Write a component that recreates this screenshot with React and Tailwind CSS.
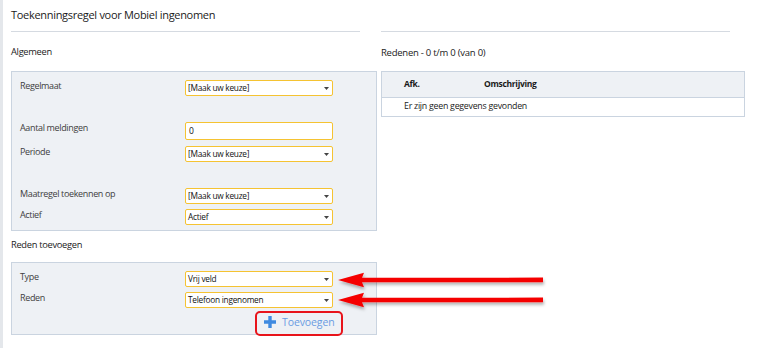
import React from "react";

const font = { fontFamily: '"Open Sans", "Noto Sans", sans-serif' };

function Select({ value }) {
  return (
    <div className="flex items-center justify-between w-[148px] h-[16px] bg-white border border-[#f5c332] rounded-[2px] pl-[2px] pr-[3px]">
      <span className="text-[8.3px] tracking-[-0.25px] text-[#111] leading-none">{value}</span>
      <svg className="shrink-0" width="5" height="3" viewBox="0 0 5 3"><path d="M0 0h5L2.5 3z" fill="#444" /></svg>
    </div>
  );
}

function Row({ label, children, className = "" }) {
  return (
    <div className={`flex items-start ${className}`}>
      <div className="w-[165px] -mt-px text-[9px] tracking-[-0.35px] leading-[13px] text-[#404040]">{label}</div>
      {children}
    </div>
  );
}

function Arrow({ y }) {
  return (
    <svg className="absolute left-[334px]" style={{ top: y - 12 }} width="220" height="26" viewBox="0 0 220 26">
      <defs>
        <filter id={`s${y}`} x="-10%" y="-60%" width="120%" height="220%">
          <feDropShadow dx="1" dy="2.5" stdDeviation="1.6" floodColor="#000" floodOpacity="0.3" />
        </filter>
      </defs>
      <g filter={`url(#s${y})`}>
        <polygon points="4,12 30,4.7 28,9.8 209,9.6 209,14.2 28,14.2 30,19.3" fill="#f50000" />
      </g>
    </svg>
  );
}

export default function App() {
  return (
    <div className="relative w-[757px] h-[348px] bg-white overflow-hidden flex" style={font}>
      <div className="w-[3px] h-full bg-[#e4e7eb]" />
      <div className="flex-1 pl-[8px] flex flex-col">
        <div className="flex">
          <div className="w-[370px] flex flex-col">
            <div className="h-[31px] pt-[7px] text-[11px] tracking-[-0.3px] leading-[16px] text-[#1a1a1a]">
              Toekenningsregel voor Mobiel ingenomen
            </div>
            <div className="w-[349px] h-px bg-[#d5dae1]" />
            <div className="h-[39px] pt-[13px] text-[9.3px] tracking-[-0.3px] leading-[14px] text-[#222]">Algemeen</div>
            <div className="w-[366px] h-[160px] bg-[#eef1f5] border border-[#cad4e0] pt-[8px] pl-[8px]">
              <Row label="Regelmaat">
                <Select value="[Maak uw keuze]" />
              </Row>
              <Row label="Aantal meldingen" className="mt-[26px]">
                <div className="w-[148px] h-[18px] bg-white border border-[#f5c332] rounded-[2px] pl-[3px] flex items-center text-[8.5px] text-[#111]">0</div>
              </Row>
              <Row label="Periode" className="mt-[6px]">
                <Select value="[Maak uw keuze]" />
              </Row>
              <Row label="Maatregel toekennen op" className="mt-[26px]">
                <Select value="[Maak uw keuze]" />
              </Row>
              <Row label="Actief" className="mt-[5px]">
                <Select value="Actief" />
              </Row>
            </div>
            <div className="h-[31px] pt-[7px] text-[9.3px] tracking-[-0.3px] leading-[14px] text-[#222]">Reden toevoegen</div>
            <div className="w-[366px] h-[73px] bg-[#eef1f5] border border-[#cad4e0] pt-[8px] pl-[8px] relative">
              <Row label="Type">
                <Select value="Vrij veld" />
              </Row>
              <Row label="Reden" className="mt-[5px]">
                <Select value="Telefoon ingenomen" />
              </Row>
              <div className="absolute left-[243px] top-[48px] w-[88px] h-[25px] border-2 border-[#e8141b] rounded-[5px] flex items-center pl-[7px] pb-[3px] gap-[6px]">
                <svg className="shrink-0" width="12" height="12" viewBox="0 0 12 12"><path d="M4.3 0h3.4v4.3H12v3.4H7.7V12H4.3V7.7H0V4.3h4.3z" fill="#3f8ae0" /></svg>
                <span className="text-[10.5px] tracking-[-0.1px] leading-none text-[#6a9ce2]">Toevoegen</span>
              </div>
            </div>
          </div>
          <div className="w-[370px] flex flex-col">
            <div className="h-[31px]" />
            <div className="w-[349px] h-px bg-[#d5dae1]" />
            <div className="h-[39px] pt-[14px] text-[9.5px] tracking-[-0.25px] leading-[14px] text-[#222]">Redenen - 0 t/m 0 (van 0)</div>
            <div className="w-[364px] border border-[#cad4e0]">
              <div className="h-[26px] bg-[#eef1f5] border-b border-[#cad4e0] flex items-center text-[8.5px] tracking-[-0.3px] font-bold text-[#1a1a1a]">
                <div className="w-[102px] pl-[22px]">Afk.</div>
                <div>Omschrijving</div>
              </div>
              <div className="h-[18px] flex items-center pl-[22px] text-[8.8px] tracking-[-0.25px] text-[#1a1a1a]">
                Er zijn geen gegevens gevonden
              </div>
            </div>
          </div>
        </div>
      </div>
      <Arrow y={280} />
      <Arrow y={300} />
    </div>
  );
}
